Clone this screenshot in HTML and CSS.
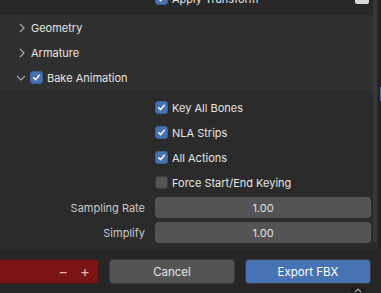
FILE: index.html
```html
<!DOCTYPE html>
<html lang="en">

<head>
    <meta charset="UTF-8">
    <title>Export FBX</title>
    <link rel="stylesheet" href="styles.css">
</head>

<body>
    <div class="window">
        <div class="main">
            <div class="content">
                <div class="top-strip">
                    <div class="top-row">
                        <span class="check on"><svg viewBox="0 0 13 13"><path d="M3.2 6.8 L5.5 9 L9.8 3.8" /></svg></span>
                        <span>Apply Transform</span>
                    </div>
                    <span class="lock"></span>
                </div>
                <div class="sections">
                    <div class="section">
                        <svg class="chev" viewBox="0 0 8 10"><path d="M2 1 L6 5 L2 9" /></svg>
                        <span>Geometry</span>
                    </div>
                    <div class="section">
                        <svg class="chev" viewBox="0 0 8 10"><path d="M2 1 L6 5 L2 9" /></svg>
                        <span>Armature</span>
                    </div>
                    <div class="section open">
                        <svg class="chev-down" viewBox="0 0 10 8"><path d="M1 2 L5 6 L9 2" /></svg>
                        <span class="check on"><svg viewBox="0 0 13 13"><path d="M3.2 6.8 L5.5 9 L9.8 3.8" /></svg></span>
                        <span>Bake Animation</span>
                    </div>
                </div>
                <div class="props">
                    <div class="prop">
                        <div class="label"></div>
                        <div class="value">
                            <span class="check on"><svg viewBox="0 0 13 13"><path d="M3.2 6.8 L5.5 9 L9.8 3.8" /></svg></span>
                            <span>Key All Bones</span>
                        </div>
                    </div>
                    <div class="prop">
                        <div class="label"></div>
                        <div class="value">
                            <span class="check on"><svg viewBox="0 0 13 13"><path d="M3.2 6.8 L5.5 9 L9.8 3.8" /></svg></span>
                            <span>NLA Strips</span>
                        </div>
                    </div>
                    <div class="prop">
                        <div class="label"></div>
                        <div class="value">
                            <span class="check on"><svg viewBox="0 0 13 13"><path d="M3.2 6.8 L5.5 9 L9.8 3.8" /></svg></span>
                            <span>All Actions</span>
                        </div>
                    </div>
                    <div class="prop">
                        <div class="label"></div>
                        <div class="value">
                            <span class="check"></span>
                            <span>Force Start/End Keying</span>
                        </div>
                    </div>
                    <div class="prop">
                        <div class="label">Sampling Rate</div>
                        <div class="value">
                            <div class="field">1.00</div>
                        </div>
                    </div>
                    <div class="prop">
                        <div class="label">Simplify</div>
                        <div class="value">
                            <div class="field">1.00</div>
                        </div>
                    </div>
                </div>
            </div>
            <div class="scrollbar"></div>
            <div class="edge"><div class="edge-mark"></div></div>
        </div>
        <div class="footer">
            <div class="btn preset">
                <span>&minus;</span>
                <span>+</span>
            </div>
            <div class="btn">Cancel</div>
            <div class="btn primary">Export FBX</div>
            <div class="tab"><svg viewBox="0 0 10 6"><path d="M2 5 L5 2 L8 5" /></svg></div>
        </div>
    </div>
</body>

</html>
```

FILE: styles.css
```css
* {
    margin: 0;
    padding: 0;
    box-sizing: border-box;
}

body {
    font-family: Inter, 'Noto Sans', sans-serif;
    font-size: 11px;
    color: #e4e4e4;
    background: #2b2b2b;
    width: 381px;
    height: 293px;
    overflow: hidden;
}

.window {
    position: relative;
    height: 293px;
}

.main {
    display: flex;
    height: 250px;
}

.content {
    flex: 1;
}

.scrollbar {
    width: 4px;
    height: 242px;
    background: #383838;
    margin-right: 1px;
}

.edge {
    width: 3px;
    background: #232323;
}

.edge-mark {
    margin: 87px 0 0 2px;
    width: 1px;
    height: 14px;
    background: #4772b3;
}

.top-strip {
    height: 15px;
    background: #282828;
    display: flex;
    overflow: hidden;
}

.top-row {
    display: flex;
    align-items: center;
    gap: 4px;
    margin: -8px 0 0 155px;
    height: 13px;
}

.lock {
    width: 14px;
    height: 4px;
    background: #d8d8d8;
    border-radius: 0 0 2px 2px;
    margin-left: auto;
    margin-right: 4px;
}

.sections {
    background: #303030;
    height: 75px;
}

.section {
    height: 25px;
    display: flex;
    align-items: center;
    padding-left: 18px;
}

.section .chev {
    width: 8px;
    height: 10px;
    margin-right: 5px;
}

.chev path,
.chev-down path,
.tab path {
    fill: none;
    stroke: #a8a8a8;
    stroke-width: 1.2;
}

.section.open {
    padding-left: 16px;
}

.chev-down {
    width: 10px;
    height: 8px;
    margin-right: 4px;
}

.section.open .check {
    margin-right: 4px;
}

.check {
    width: 13px;
    height: 13px;
    border-radius: 3px;
    background: #545454;
    border: 1px solid #3d3d3d;
    display: inline-block;
    flex: none;
}

.check.on {
    background: #4772b3;
    border-color: #3a5f99;
}

.check svg {
    display: block;
    width: 11px;
    height: 11px;
}

.check path {
    fill: none;
    stroke: #fff;
    stroke-width: 1.8;
    stroke-linecap: round;
    stroke-linejoin: round;
}

.props {
    padding: 5px 2px 5px 0;
}

.prop {
    height: 25px;
    display: flex;
    align-items: center;
}

.label {
    width: 145px;
    text-align: right;
    color: #c8c8c8;
    margin-right: 10px;
}

.value {
    flex: 1;
    display: flex;
    align-items: center;
    gap: 4px;
}

.field {
    flex: 1;
    height: 21px;
    background: #545454;
    border-radius: 4px;
    display: flex;
    align-items: center;
    justify-content: center;
    color: #e0e0e0;
}

.footer {
    height: 43px;
    background: #262626;
    display: flex;
    gap: 10px;
    padding-top: 9px;
}

.btn {
    height: 25px;
    width: 126px;
    border-radius: 4px;
    background: #545454;
    border: 1px solid #3a3a3a;
    display: flex;
    align-items: center;
    justify-content: center;
    font-size: 11.5px;
}

.btn.preset {
    width: 104px;
    margin-left: -5px;
    background: #7b1414;
    border-color: #4a1a1a;
    justify-content: flex-end;
    gap: 12px;
    padding-right: 8px;
    color: #dbb7b7;
    font-size: 15px;
}

.btn.primary {
    background: #4772b3;
    color: #fff;
}

.tab {
    position: absolute;
    left: 351px;
    bottom: 0;
    width: 14px;
    height: 6px;
    background: #1e1e1e;
    border-radius: 3px 3px 0 0;
}

.tab svg {
    display: block;
    width: 10px;
    height: 6px;
    margin: 0 auto;
}
```
